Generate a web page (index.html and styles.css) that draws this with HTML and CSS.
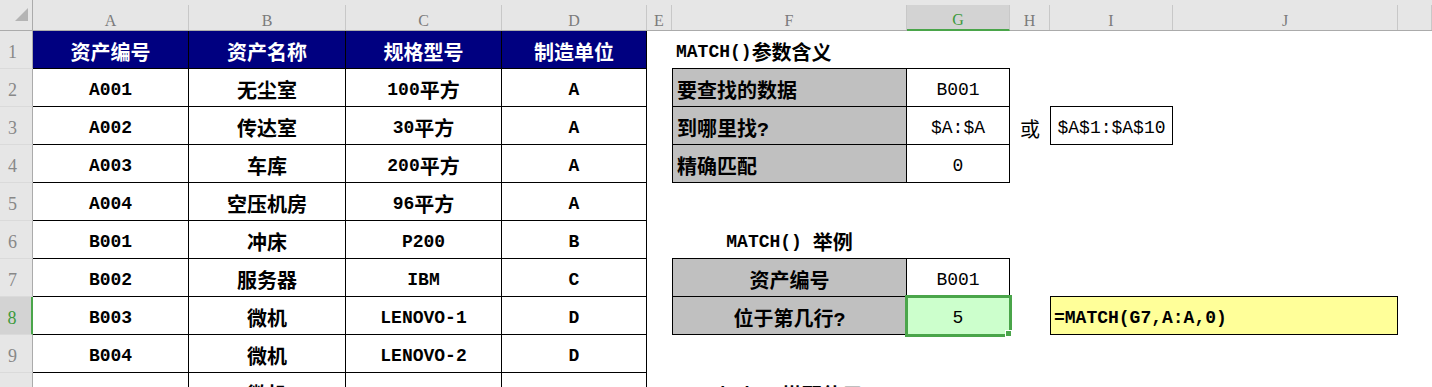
FILE: index.html
```html
<!DOCTYPE html>
<html lang="zh-CN">
  <head>
    <meta charset="UTF-8" />
    <meta name="viewport" content="width=device-width, initial-scale=1.0" />
    <title>MATCH 函数</title>
    <link rel="stylesheet" href="styles.css">
  </head>
  <body>
    <div class="sheet">
      <!-- column letters -->
      <div class="colheads">
        <div class="corner">
          <svg width="32" height="26" viewBox="0 0 32 26"><polygon points="28,8 28,21 15,21" fill="#b4b4b4" /></svg>
        </div>
        <div class="ch">A</div>
        <div class="ch">B</div>
        <div class="ch">C</div>
        <div class="ch">D</div>
        <div class="ch">E</div>
        <div class="ch">F</div>
        <div class="ch sel">G</div>
        <div class="ch">H</div>
        <div class="ch">I</div>
        <div class="ch">J</div>
        <div class="ch"></div>
      </div>

      <div class="row">
        <div class="rh">1</div>
        <div class="c b hd bold">资产编号</div>
        <div class="c b hd bold">资产名称</div>
        <div class="c b hd bold">规格型号</div>
        <div class="c b hd bold">制造单位</div>
        <div class="c"></div>
        <div class="c bb left bold"><span class="en">MATCH()</span>参数含义</div>
        <div class="c bb"></div>
      </div>

      <div class="row">
        <div class="rh">2</div>
        <div class="c b bold en">A001</div>
        <div class="c b bold">无尘室</div>
        <div class="c b bold"><span class="en">100</span>平方</div>
        <div class="c b bold en">A</div>
        <div class="c"></div>
        <div class="c b bl gy left bold">要查找的数据</div>
        <div class="c b en">B001</div>
        <div class="c"></div>
        <div class="c bb"></div>
      </div>

      <div class="row">
        <div class="rh">3</div>
        <div class="c b bold en">A002</div>
        <div class="c b bold">传达室</div>
        <div class="c b bold"><span class="en">30</span>平方</div>
        <div class="c b bold en">A</div>
        <div class="c"></div>
        <div class="c b bl gy left bold">到哪里找?</div>
        <div class="c b en">$A:$A</div>
        <div class="c">或</div>
        <div class="c b bl en">$A$1:$A$10</div>
      </div>

      <div class="row">
        <div class="rh">4</div>
        <div class="c b bold en">A003</div>
        <div class="c b bold">车库</div>
        <div class="c b bold"><span class="en">200</span>平方</div>
        <div class="c b bold en">A</div>
        <div class="c"></div>
        <div class="c b bl gy left bold">精确匹配</div>
        <div class="c b en">0</div>
      </div>

      <div class="row">
        <div class="rh">5</div>
        <div class="c b bold en">A004</div>
        <div class="c b bold">空压机房</div>
        <div class="c b bold"><span class="en">96</span>平方</div>
        <div class="c b bold en">A</div>
      </div>

      <div class="row">
        <div class="rh">6</div>
        <div class="c b bold en">B001</div>
        <div class="c b bold">冲床</div>
        <div class="c b bold en">P200</div>
        <div class="c b bold en">B</div>
        <div class="c"></div>
        <div class="c bb bold"><span class="en">MATCH()&nbsp;</span>举例</div>
        <div class="c bb"></div>
      </div>

      <div class="row">
        <div class="rh">7</div>
        <div class="c b bold en">B002</div>
        <div class="c b bold">服务器</div>
        <div class="c b bold en">IBM</div>
        <div class="c b bold en">C</div>
        <div class="c"></div>
        <div class="c b bl gy bold">资产编号</div>
        <div class="c b en">B001</div>
        <div class="c"></div>
        <div class="c bb"></div>
        <div class="c bb"></div>
      </div>

      <div class="row">
        <div class="rh sel">8</div>
        <div class="c b bold en">B003</div>
        <div class="c b bold">微机</div>
        <div class="c b bold en">LENOVO-1</div>
        <div class="c b bold en">D</div>
        <div class="c"></div>
        <div class="c b bl gy bold">位于第几行?</div>
        <div class="c b en pick">5</div>
        <div class="c"></div>
        <div class="c b bl yl left bold en formula">=MATCH(G7,A:A,0)</div>
      </div>

      <div class="row">
        <div class="rh">9</div>
        <div class="c b bold en">B004</div>
        <div class="c b bold">微机</div>
        <div class="c b bold en">LENOVO-2</div>
        <div class="c b bold en">D</div>
      </div>

      <div class="row">
        <div class="rh">10</div>
        <div class="c b bold en">B005</div>
        <div class="c b bold">微机</div>
        <div class="c b bold en">LENOVO-3</div>
        <div class="c b bold en">D</div>
        <div class="c"></div>
        <div class="c bold"><span class="en">index&nbsp;</span>搭配使用</div>
      </div>
    </div>
  </body>
</html>
```

FILE: styles.css
```css
html,
body {
  margin: 0;
  padding: 0;
  height: 100%;
  overflow: hidden;
  background: #fff;
}
body {
  font-family: "Liberation Mono", "Noto Sans CJK SC", monospace;
  font-size: 20px;
  color: #000;
}
.sheet {
  width: 1432px;
}

/* same column widths for the letter bar and every row */
.colheads,
.row {
  display: grid;
  grid-template-columns: 33px 156px 157px 156px 145px 25px 235px 103px 40px 123px 225px 1fr;
}

/* column letters */
.colheads {
  height: 31px;
  padding-top: 5px;
  box-sizing: border-box;
  background: #e6e6e6;
  border-bottom: 1px solid #ababab;
}
.corner {
  margin-top: -5px;
  border-right: 1px solid #ababab;
}
.corner svg {
  display: block;
}
.ch {
  display: flex;
  align-items: center;
  justify-content: center;
  padding-top: 6px;
  box-sizing: border-box;
  border-right: 1px solid #c8c8c8;
  font-family: "Liberation Serif", serif;
  font-size: 16px;
  color: #7b7b7b;
}
.ch.sel {
  background: #d3d3d3;
  color: #3c9a3c;
  border-bottom: 2px solid #4aa54a;
  margin-bottom: -1px;
}

/* rows */
.row {
  height: 38px;
}
.rh {
  display: flex;
  align-items: center;
  justify-content: center;
  padding: 6px 7px 0 0;
  box-sizing: border-box;
  background: #e6e6e6;
  border-right: 1px solid #ababab;
  border-bottom: 1px solid #dadada;
  font-family: "Liberation Serif", serif;
  font-size: 18px;
  color: #888;
}
.rh.sel {
  background: #d3d3d3;
  color: #3c9a3c;
  border-right: 2px solid #4aa54a;
}

.c {
  display: flex;
  align-items: center;
  justify-content: center;
  padding-top: 4px;
  box-sizing: border-box;
  white-space: nowrap;
  min-width: 0;
}
.left {
  justify-content: flex-start;
  padding-left: 4px;
}
.bold {
  font-weight: 700;
}
.en {
  font-size: 18px;
}

/* cell borders */
.b {
  border-right: 1px solid #000;
  border-bottom: 1px solid #000;
}
.bl {
  border-left: 1px solid #000;
}
.bb {
  border-bottom: 1px solid #000;
}

/* fills */
.hd {
  background: #000080;
  color: #fff;
}
.gy {
  background: #c0c0c0;
}
.yl {
  background: #ffff99;
}
.formula {
  grid-column: span 2;
  padding-left: 3px;
}

/* active cell */
.pick {
  position: relative;
  background: #ccffcc;
  outline: 3px solid #4aa54a;
  outline-offset: -1px;
}
.pick::after {
  content: "";
  position: absolute;
  right: -3px;
  bottom: -3px;
  width: 5px;
  height: 5px;
  background: #4aa54a;
  border: 1px solid #fff;
}
```
